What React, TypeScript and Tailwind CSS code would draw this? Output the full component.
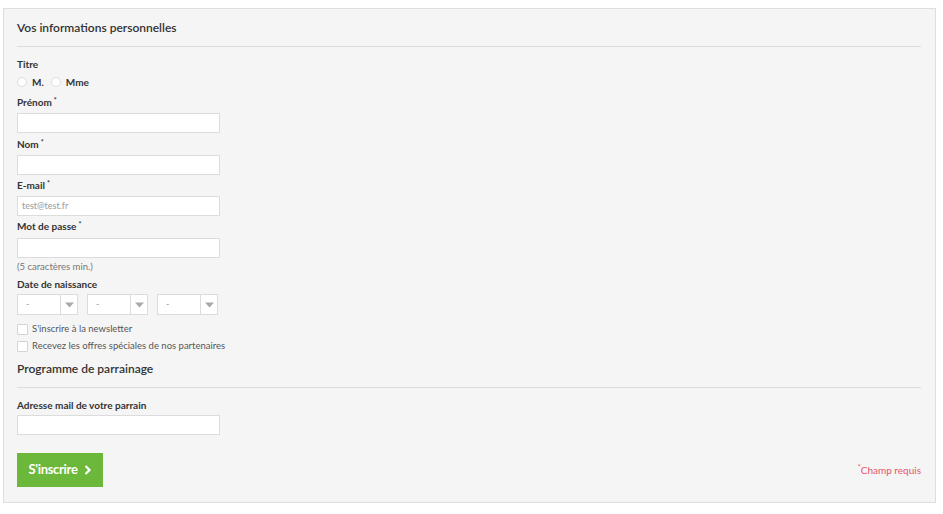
import React from "react";

function Label({ children, required }: { children: React.ReactNode; required?: boolean }) {
  return (
    <div className="h-[14px] text-[10px] leading-[14px] font-bold text-[#333]">
      {children}
      {required && <sup className="ml-[2px] text-[7px] text-[#333]">*</sup>}
    </div>
  );
}

function TextInput({ placeholder }: { placeholder?: string }) {
  return (
    <div className="w-[203px] h-[20px] bg-white border border-[#dcdcdc] px-[4px] text-[9px] leading-[18px] text-[#999]">
      {placeholder}
    </div>
  );
}

function DateSelect() {
  return (
    <div className="flex w-[61px] h-[21px] bg-white border border-[#dcdcdc]">
      <div className="flex-1 pl-[8px] text-[9px] leading-[18px] text-[#999]">-</div>
      <div className="w-[17px] h-full border-l border-[#dcdcdc] bg-white flex items-center justify-center">
        <svg width="9" height="6" viewBox="0 0 9 6">
          <path d="M0 0.5h9L4.5 5.5z" fill="#aaa" />
        </svg>
      </div>
    </div>
  );
}

function Check({ children }: { children: React.ReactNode }) {
  return (
    <div className="flex items-center h-[14px] gap-[4px]">
      <span className="w-[11px] h-[11px] bg-white border border-[#d4d4d4] rounded-[1px]" />
      <span className="text-[9.5px] text-[#555]">{children}</span>
    </div>
  );
}

export default function App() {
  const font = { fontFamily: "Lato, 'Open Sans', sans-serif" };
  return (
    <div className="w-[943px] h-[514px] bg-white pt-[8px] pl-[3px]" style={font}>
      <div className="w-[933px] h-[495px] bg-[#f5f5f5] border border-[#dedede] px-[13px] pt-[11px] flex flex-col">
        <div className="text-[12px] leading-[16px] font-semibold text-[#333]">Vos informations personnelles</div>
        <div className="mt-[10px] h-px bg-[#dcdcdc] w-[904px]" />

        <div className="mt-[10px]">
          <Label>Titre</Label>
        </div>
        <div className="mt-[4px] flex items-center h-[14px] text-[10px] font-bold text-[#333]">
          <span className="w-[10px] h-[10px] rounded-full bg-white border border-[#dcdcdc] mr-[5px]" />
          <span>M.</span>
          <span className="w-[10px] h-[10px] rounded-full bg-white border border-[#dcdcdc] ml-[7px] mr-[5px]" />
          <span>Mme</span>
        </div>

        <div className="mt-[6px]"><Label required>Prénom</Label></div>
        <div className="mt-[4px]"><TextInput /></div>

        <div className="mt-[4px]"><Label required>Nom</Label></div>
        <div className="mt-[4px]"><TextInput /></div>

        <div className="mt-[3px]"><Label required>E-mail</Label></div>
        <div className="mt-[4px]"><TextInput placeholder="test@test.fr" /></div>

        <div className="mt-[3px]"><Label required>Mot de passe</Label></div>
        <div className="mt-[5px]"><TextInput /></div>
        <div className="mt-[2px] h-[14px] text-[9.5px] leading-[14px] text-[#777]">(5 caractères min.)</div>

        <div className="mt-[3px]"><Label>Date de naissance</Label></div>
        <div className="mt-[3px] flex gap-[9px]">
          <DateSelect />
          <DateSelect />
          <DateSelect />
        </div>

        <div className="mt-[7px] flex flex-col gap-[3px]">
          <Check>S'inscrire à la newsletter</Check>
          <Check>Recevez les offres spéciales de nos partenaires</Check>
        </div>

        <div className="mt-[8px] text-[12px] leading-[16px] font-semibold text-[#333]">Programme de parrainage</div>
        <div className="mt-[10px] h-px bg-[#dcdcdc] w-[904px]" />

        <div className="mt-[10px]"><Label>Adresse mail de votre parrain</Label></div>
        <div className="mt-[3px]"><TextInput /></div>

        <div className="mt-[18px] flex items-center justify-between w-[904px]">
          <button className="w-[86px] h-[34px] bg-[#6cb83a] text-white text-[13px] font-bold flex items-center justify-center gap-[6px] tracking-[-0.3px]">
            S'inscrire
            <svg width="8" height="10" viewBox="0 0 8 10">
              <path d="M1.5 1l4 4-4 4" stroke="#fff" strokeWidth="2.2" fill="none" />
            </svg>
          </button>
          <div className="text-[10px] text-[#e8546b]">
            <sup className="text-[7px]">*</sup>Champ requis
          </div>
        </div>
      </div>
    </div>
  );
}
